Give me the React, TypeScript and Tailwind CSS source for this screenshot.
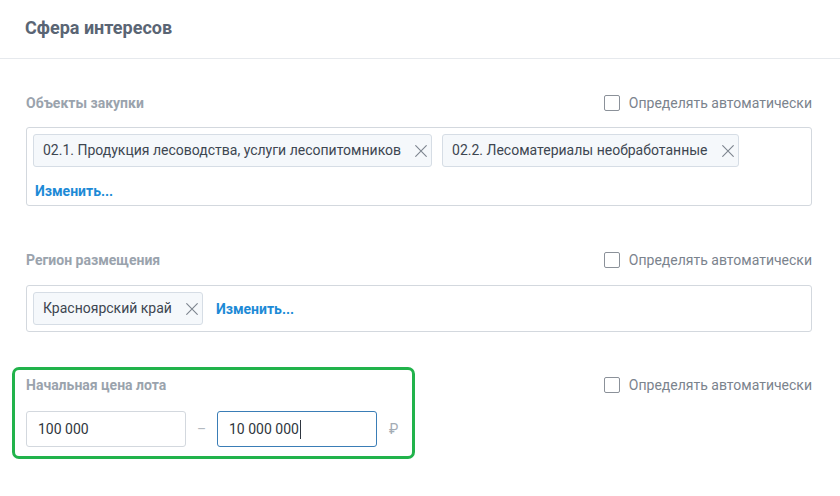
import React from "react";

const font = { fontFamily: "Roboto, 'Noto Sans', sans-serif" };

function CloseIcon() {
  return (
    <svg width="12" height="12" viewBox="0 0 12 12" fill="none" className="shrink-0">
      <path d="M0.7 0.7L11.3 11.3M11.3 0.7L0.7 11.3" stroke="#7c848e" strokeWidth="1.1" strokeLinecap="round" />
    </svg>
  );
}

function Chip({ label }: { label: string }) {
  return (
    <div className="flex h-[33px] items-center gap-[14px] rounded-[3px] border border-[#d6dde5] bg-[#f5f8fb] pl-[9px] pr-[4px] text-[14px] text-[#3d4651]">
      <span>{label}</span>
      <CloseIcon />
    </div>
  );
}

function AutoCheck() {
  return (
    <label className="flex h-[24px] items-center gap-[9px] text-[14px] text-[#7b838d]">
      <span className="h-[16px] w-[16px] rounded-[2px] border border-[#8b9199] bg-white" />
      <span>Определять автоматически</span>
    </label>
  );
}

function FieldLabel({ children }: { children: React.ReactNode }) {
  return <div className="text-[14px] font-bold leading-[24px] text-[#9aa3ad]">{children}</div>;
}

function ChangeLink() {
  return <span className="text-[14px] font-bold leading-[20px] text-[#1d8ad6]">Изменить...</span>;
}

export default function App() {
  return (
    <div style={font} className="h-[496px] w-[840px] overflow-hidden bg-white">
      <header className="flex h-[59px] items-center border-b border-[#e6e9ed] pb-[4px] pl-[25px]">
        <h1 className="text-[18px] font-bold text-[#5a6574]">Сфера интересов</h1>
      </header>

      <section className="pl-[26px] pr-[28px] pt-[32px]">
        <div className="flex items-center justify-between">
          <FieldLabel>Объекты закупки</FieldLabel>
          <AutoCheck />
        </div>
        <div className="mt-[12px] rounded-[3px] border border-[#d3d8de] p-[6px]">
          <div className="flex flex-wrap gap-[10px]">
            <Chip label="02.1. Продукция лесоводства, услуги лесопитомников" />
            <Chip label="02.2. Лесоматериалы необработанные" />
          </div>
          <div className="mt-[12px] h-[20px] px-[2px]">
            <ChangeLink />
          </div>
        </div>
      </section>

      <section className="pl-[26px] pr-[28px] pt-[42px]">
        <div className="flex items-center justify-between">
          <FieldLabel>Регион размещения</FieldLabel>
          <AutoCheck />
        </div>
        <div className="mt-[13px] flex items-center gap-[13px] rounded-[3px] border border-[#d3d8de] p-[6px]">
          <Chip label="Красноярский край" />
          <ChangeLink />
        </div>
      </section>

      <section className="flex items-start justify-between pl-[12px] pr-[28px] pt-[35px]">
        <div className="w-[403px] rounded-[7px] border-[3px] border-[#21b34b] pb-[9px] pl-[11px] pt-[3px]">
          <FieldLabel>Начальная цена лота</FieldLabel>
          <div className="mt-[14px] flex items-center">
            <div className="flex h-[36px] w-[160px] items-center rounded-[3px] border border-[#d3d8de] px-[11px] text-[14px] text-[#2f3640]">
              100 000
            </div>
            <div className="flex w-[31px] justify-center text-[14px] text-[#b3b9c0]">–</div>
            <div className="flex h-[36px] w-[160px] items-center rounded-[3px] border border-[#3a7db6] px-[11px] text-[14px] text-[#2f3640]">
              <span>10 000 000</span>
              <span className="ml-px h-[19px] w-px bg-[#2f3640]" />
            </div>
            <div className="ml-[12px] text-[14px] text-[#a3abb4]">₽</div>
          </div>
        </div>
        <div className="mt-[6px]">
          <AutoCheck />
        </div>
      </section>
    </div>
  );
}
